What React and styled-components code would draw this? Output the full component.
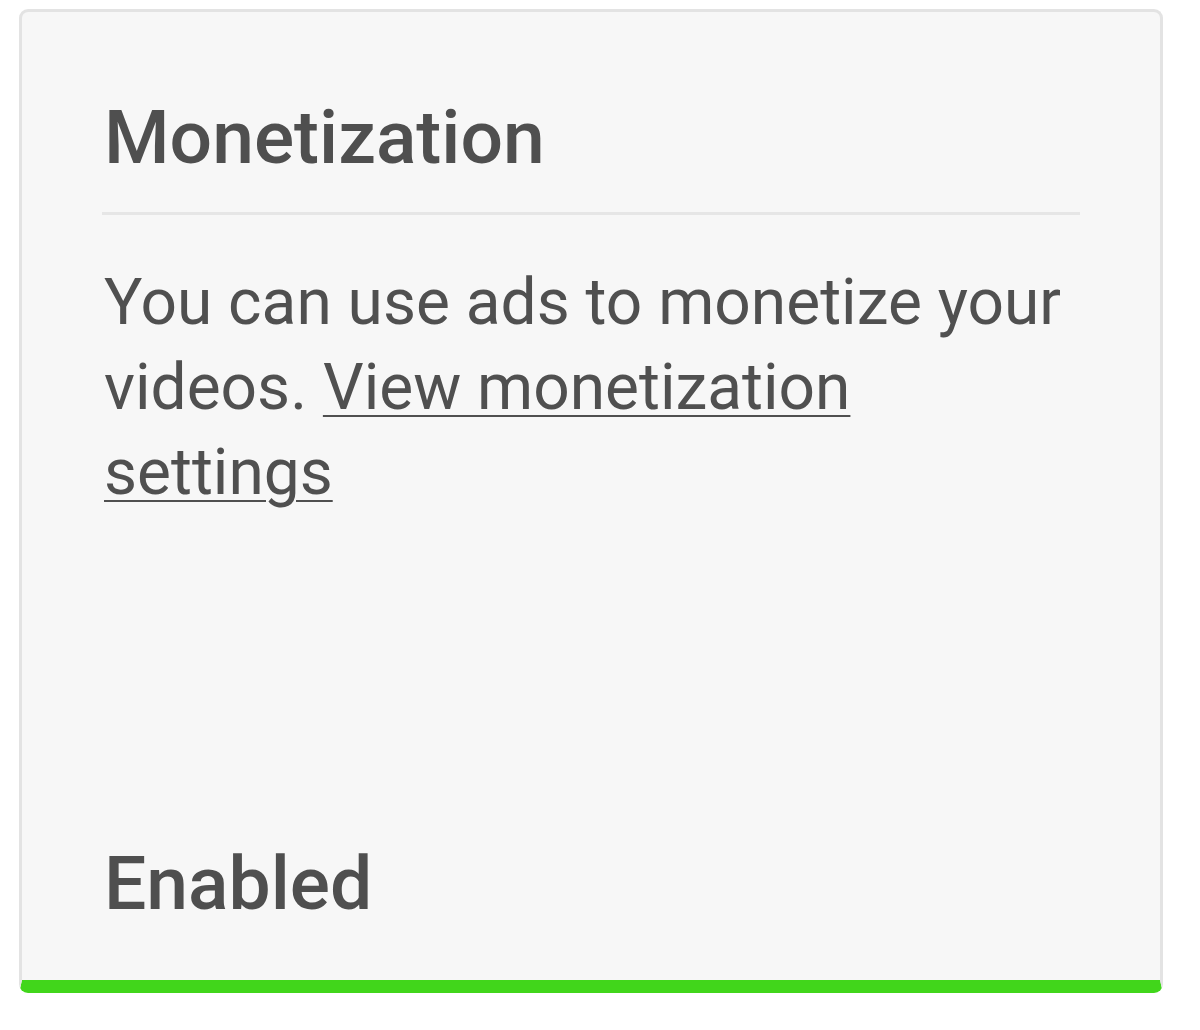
import React from "react";
import styled, { createGlobalStyle } from "styled-components";

const GlobalStyle = createGlobalStyle`
  html, body {
    margin: 0;
    padding: 0;
    background: #ffffff;
    font-family: Roboto, "Liberation Sans", sans-serif;
  }
`;

const Page = styled.div`
  padding: 9px 37px 0 19px;
`;

const Card = styled.div`
  box-sizing: border-box;
  height: 984px;
  display: flex;
  flex-direction: column;
  background: #f7f7f7;
  border: 3px solid #e3e3e3;
  border-bottom: 13px solid #41d61b;
  border-radius: 9px;
  padding: 87px 80px 0 82px;
`;

const Title = styled.h2`
  margin: 0;
  font-size: 75px;
  line-height: 76px;
  font-weight: 500;
  color: #4f4f4f;
`;

const Divider = styled.hr`
  margin: 37px 0 0 -2px;
  border: none;
  height: 3px;
  background: #e6e6e6;
`;

const Text = styled.p`
  margin: 45px 0 0;
  font-size: 64px;
  line-height: 85px;
  color: #505050;
`;

const Link = styled.a`
  color: inherit;
  text-decoration: underline;
  text-decoration-thickness: 2px;
  text-underline-offset: 6px;
`;

const Status = styled.div`
  margin-top: auto;
  margin-bottom: 59px;
  font-size: 75px;
  line-height: 76px;
  font-weight: 500;
  color: #4f4f4f;
`;

export default function App() {
  return (
    <>
      <GlobalStyle />
      <Page>
        <Card>
          <Title>Monetization</Title>
          <Divider />
          <Text>
            You can use ads to monetize your videos.{" "}
            <Link href="#">View monetization settings</Link>
          </Text>
          <Status>Enabled</Status>
        </Card>
      </Page>
    </>
  );
}
